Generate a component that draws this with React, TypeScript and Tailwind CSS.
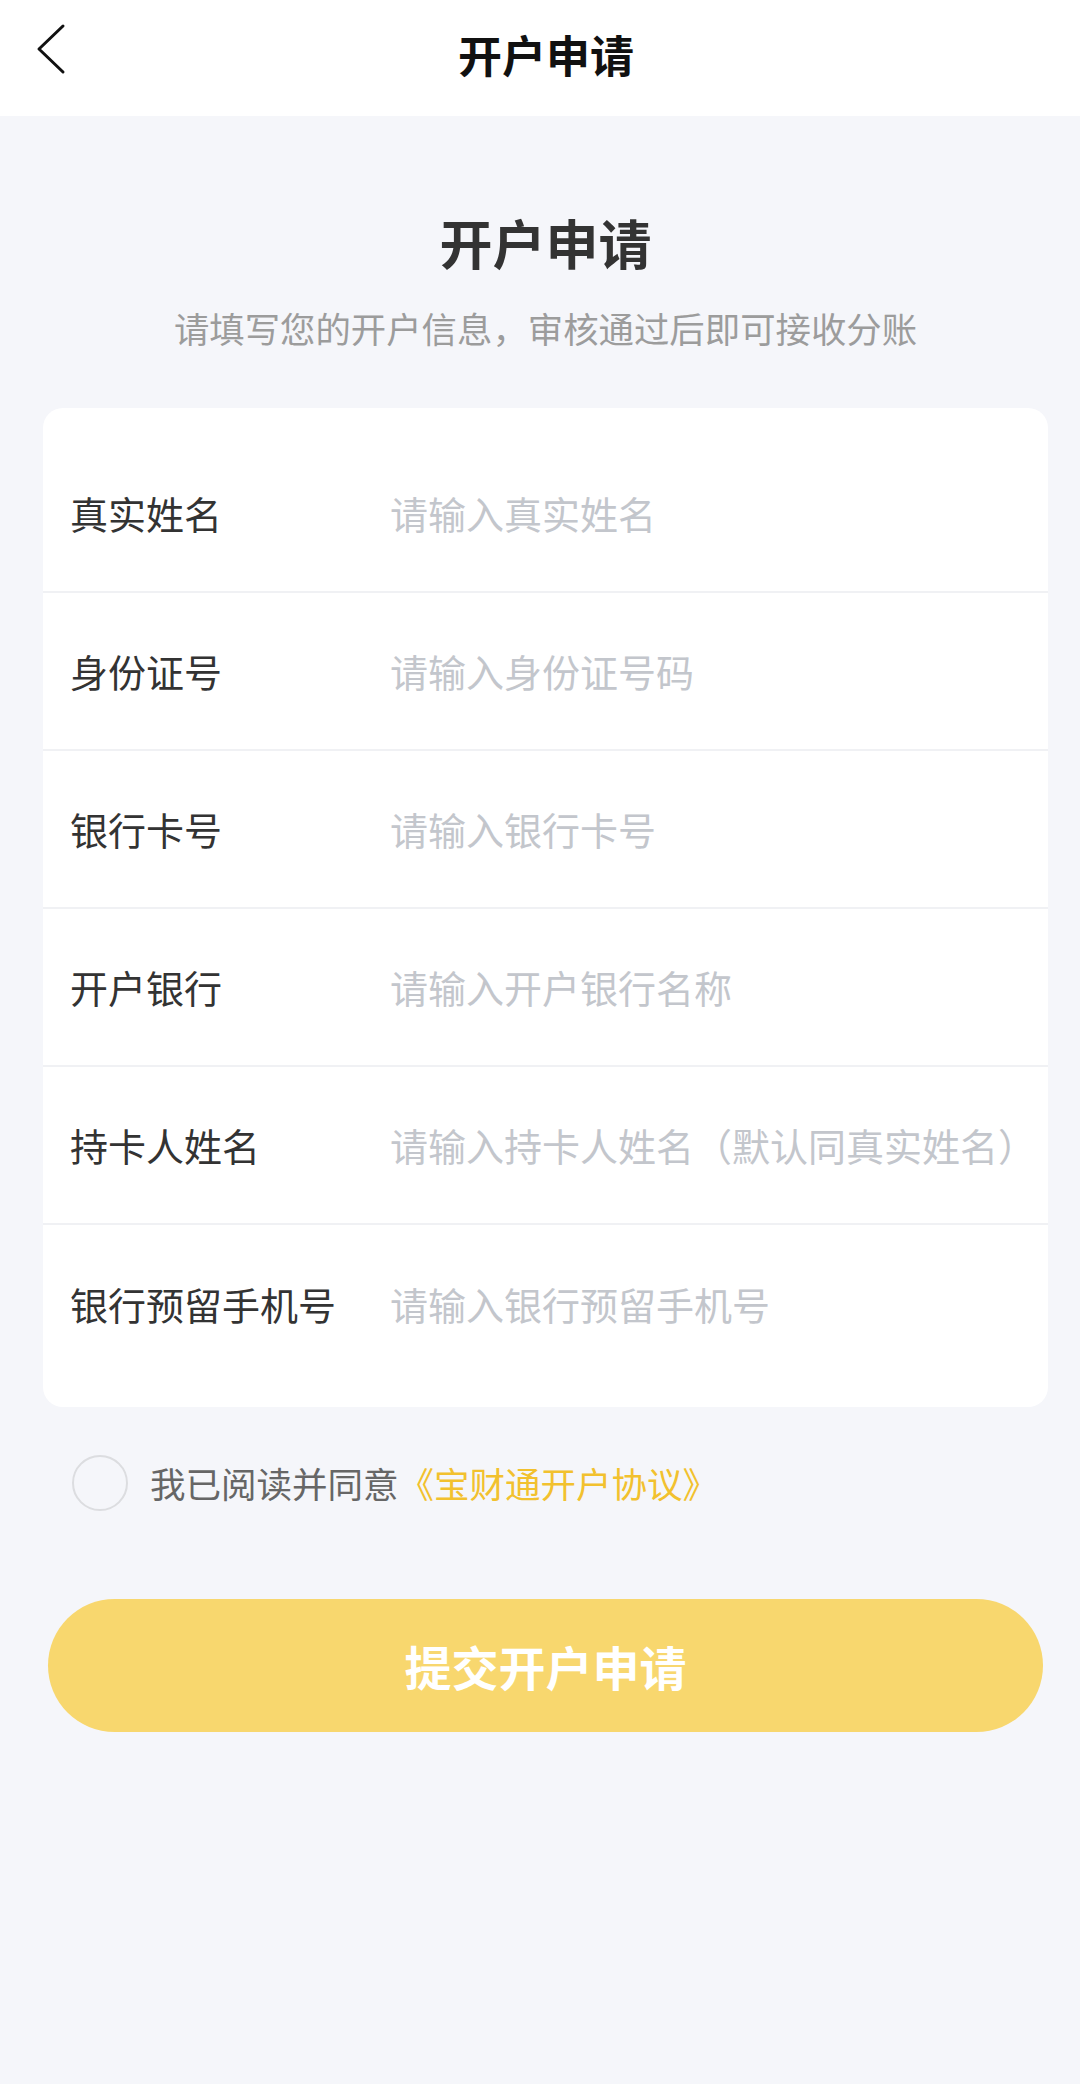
const fields = [
  { label: '真实姓名', placeholder: '请输入真实姓名' },
  { label: '身份证号', placeholder: '请输入身份证号码' },
  { label: '银行卡号', placeholder: '请输入银行卡号' },
  { label: '开户银行', placeholder: '请输入开户银行名称' },
  { label: '持卡人姓名', placeholder: '请输入持卡人姓名（默认同真实姓名）' },
  { label: '银行预留手机号', placeholder: '请输入银行预留手机号' },
]

function Header() {
  return (
    <div className="relative h-[116px] bg-white flex items-center justify-center pl-[12px] pb-[8px]">
      <svg className="absolute left-[30px] top-[22px]" width="40" height="54" viewBox="0 0 40 54" fill="none">
        <polyline points="33,4 9,27 33,50" stroke="#111" strokeWidth="3" strokeLinecap="round" strokeLinejoin="round" />
      </svg>
      <h1 className="text-[44px] leading-[44px] font-bold text-[#111]">开户申请</h1>
    </div>
  )
}

export default function App() {
  return (
    <div
      className="min-h-[2084px] bg-[#f5f6fa]"
      style={{ fontFamily: '"Noto Sans CJK SC", "Noto Sans", sans-serif' }}
    >
      <Header />

      <div className="pl-[43px] pr-[32px] flex flex-col">
        <h2 className="mt-[100px] text-center text-[53px] leading-[53px] font-bold text-[#333]">开户申请</h2>
        <p className="mt-[41px] text-center text-[35.4px] leading-[36px] text-[#9c9c9c]">
          请填写您的开户信息，审核通过后即可接收分账
        </p>

        {/* 表单 */}
        <div className="mt-[62px] bg-white rounded-[20px] pt-[27px] pb-[24px]">
          {fields.map((f, i) => (
            <div
              key={f.label}
              className={`h-[158px] flex items-center pl-[27px] ${i < fields.length - 1 ? 'border-b-2 border-[#f0f1f4]' : ''}`}
            >
              <span className="w-[320px] shrink-0 text-[38px] leading-[38px] text-[#333]">{f.label}</span>
              <span className="text-[38px] leading-[38px] text-[#c3c6cc] whitespace-nowrap">{f.placeholder}</span>
            </div>
          ))}
        </div>

        {/* 协议 */}
        <div className="mt-[48px] flex items-center pl-[29px]">
          <div className="w-[56px] h-[56px] rounded-full border-2 border-[#dcdde0] bg-transparent shrink-0" />
          <p className="ml-[22px] text-[35.5px] leading-[36px] text-[#666]">
            我已阅读并同意<span className="text-[#f2c12e]">《宝财通开户协议》</span>
          </p>
        </div>

        <button className="mt-[88px] mx-[5px] h-[133px] rounded-full bg-[#f8d76e] flex items-center justify-center">
          <span className="text-[47px] leading-[47px] font-bold text-white">提交开户申请</span>
        </button>
      </div>
    </div>
  )
}
